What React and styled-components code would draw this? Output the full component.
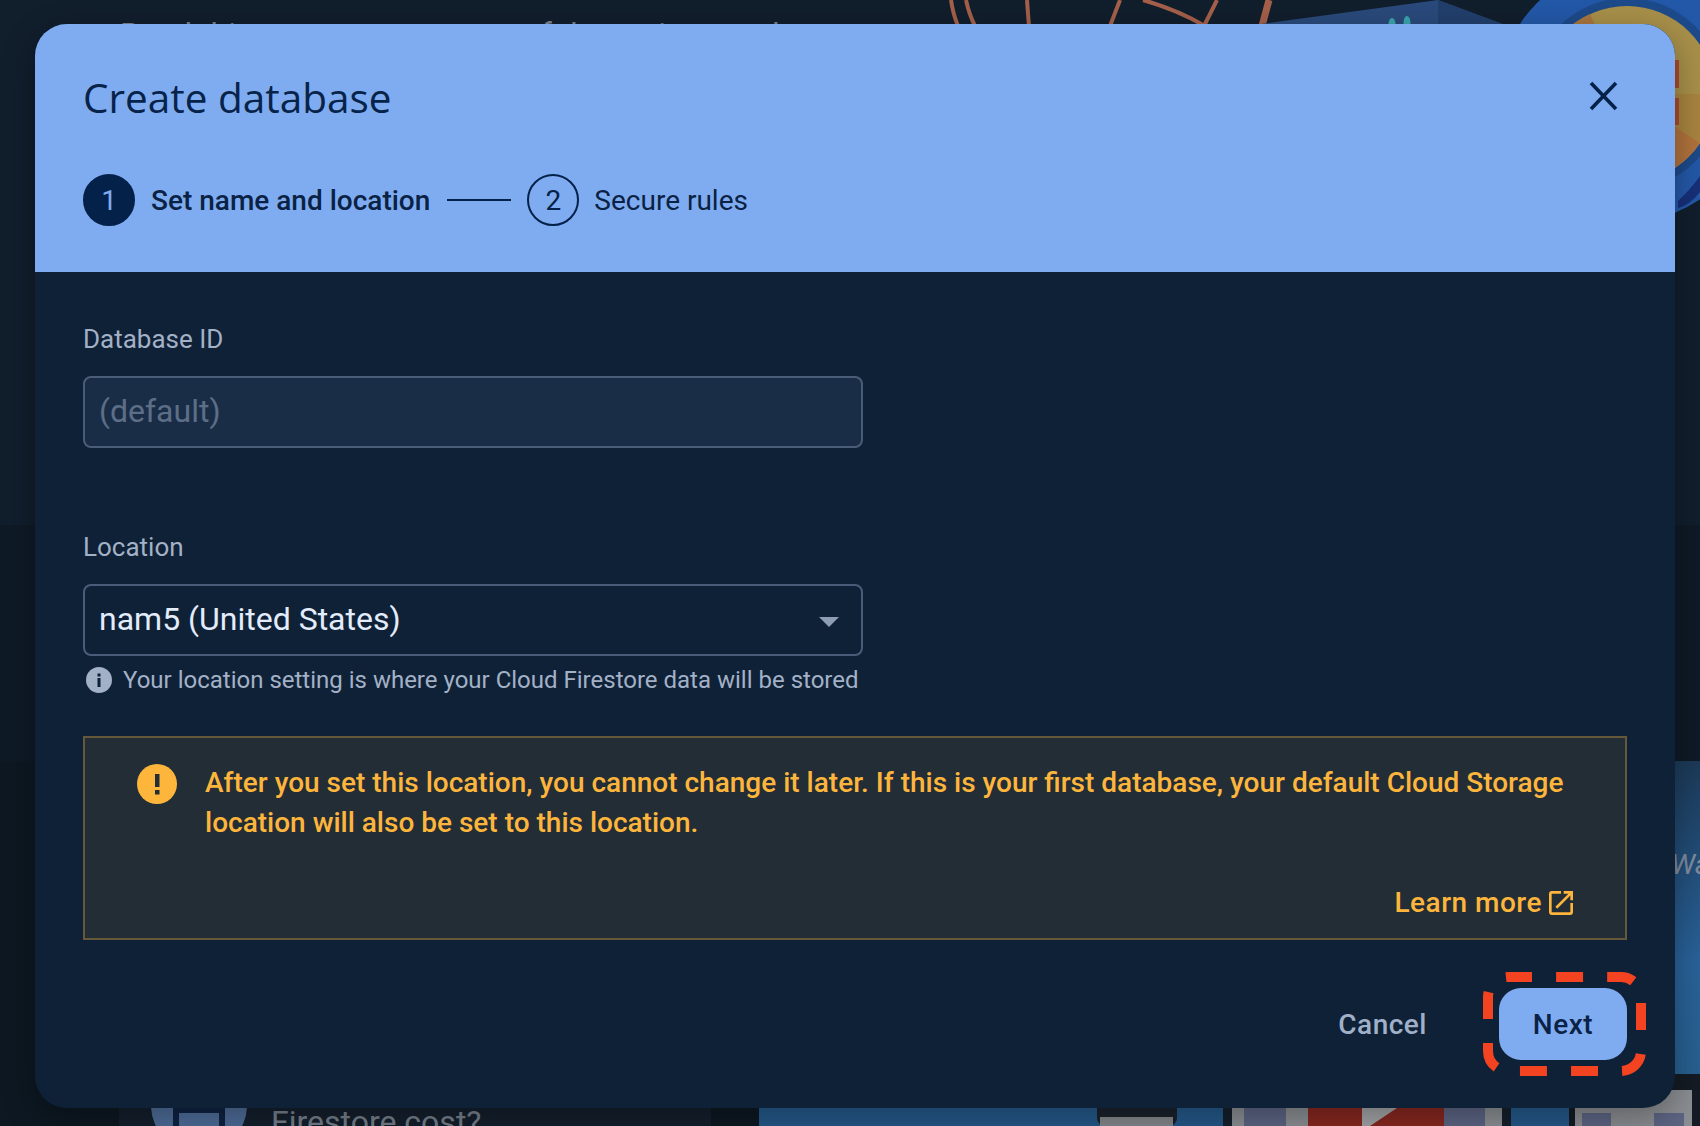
import React from "react";
import styled, { createGlobalStyle } from "styled-components";

const Global = createGlobalStyle`
  html, body { margin: 0; padding: 0; background: #101e2c; }
  body { font-family: Roboto, "Liberation Sans", sans-serif; }
  * { box-sizing: border-box; }
`;

const Screen = styled.div`
  position: relative;
  width: 1700px;
  height: 1126px;
  overflow: hidden;
  padding: 24px 25px 18px 35px;
`;

const Backdrop = styled.div`
  position: absolute;
  inset: 0;
  display: flex;
  flex-direction: column;
`;
const HeroBand = styled.div`
  height: 525px;
  background: #111e2c;
  padding: 14px 0 0 120px;
`;
const HeroText = styled.div`
  font-size: 32px;
  line-height: 40px;
  color: #7a838e;
  white-space: nowrap;
`;
const MidBand = styled.div`
  height: 236px;
  background: #0e1a26;
`;
const LowerBand = styled.div`
  flex: 1;
  display: flex;
  gap: 48px;
  padding-left: 119px;
  background: #0d1822;
`;
const TipCard = styled.div`
  flex: none;
  width: 592px;
  background: #141f2c;
  display: flex;
  align-items: flex-end;
  gap: 24px;
  padding-left: 32px;
  overflow: hidden;
`;
const TipText = styled.div`
  font-size: 32px;
  line-height: 36px;
  height: 22px;
  color: #77818d;
  white-space: nowrap;
`;
const PromoPanel = styled.div`
  flex: 1;
  min-width: 0;
  background: linear-gradient(180deg, #1c3a58 0%, #29629a 55%, #27608f 85%, #24588a 100%);
  padding: 86px 0 0 912px;
`;
const PromoText = styled.div`
  font-size: 28px;
  line-height: 36px;
  font-style: italic;
  color: #7f8d9e;
  white-space: nowrap;
`;
const ArtLayer = styled.svg`
  position: absolute;
  left: 0;
  top: 0;
`;

const Dialog = styled.section`
  position: relative;
  width: 1640px;
  height: 1084px;
  border-radius: 32px;
  overflow: hidden;
  background: #0f2137;
  box-shadow: 0 10px 34px rgba(0, 0, 0, 0.32);
  display: flex;
  flex-direction: column;
`;
const Header = styled.header`
  height: 248px;
  background: #7facf0;
  padding: 48px 48px 0;
  color: #0a2245;
  display: flex;
  flex-direction: column;
`;
const TitleRow = styled.div`
  display: flex;
  justify-content: space-between;
  align-items: center;
  height: 52px;
`;
const Title = styled.h1`
  margin: 0;
  font-family: "Open Sans", sans-serif;
  font-weight: 500;
  font-size: 40.5px;
  line-height: 52px;
  color: #08234a;
`;
const CloseButton = styled.button`
  width: 40px;
  height: 40px;
  margin: -4px 0 0;
  transform: translateX(-4px);
  padding: 0;
  border: 0;
  background: none;
  display: flex;
  align-items: center;
  justify-content: center;
`;
const Stepper = styled.div`
  display: flex;
  align-items: center;
  gap: 16px;
  margin-top: 50px;
`;
const StepCircle = styled.div`
  width: 52px;
  height: 52px;
  border-radius: 50%;
  border: 2px solid #04214a;
  background: ${(p) => (p.$active ? "#04214a" : "transparent")};
  color: ${(p) => (p.$active ? "#7facf0" : "#04214a")};
  display: flex;
  align-items: center;
  justify-content: center;
  font-size: 28px;
  font-weight: 400;
  margin-right: ${(p) => (p.$active ? 0 : -1)}px;
`;
const StepLabel = styled.div`
  font-size: 28px;
  line-height: 36px;
  margin-top: 2px;
  font-weight: ${(p) => (p.$active ? 500 : 400)};
  color: #0a2245;
`;
const StepLine = styled.div`
  width: 64px;
  height: 2px;
  margin-left: 1px;
  background: #04214a;
`;

const Body = styled.div`
  flex: 1;
  padding: 51px 48px 48px;
  display: flex;
  flex-direction: column;
`;
const FieldLabel = styled.label`
  display: block;
  font-size: 26px;
  line-height: 32px;
  color: #a3b1c6;
  margin-bottom: 21px;
`;
const InputBox = styled.div`
  width: 780px;
  height: 72px;
  border: 2px solid #4a5c77;
  border-radius: 8px;
  background: ${(p) => (p.$disabled ? "#1a2d47" : "#0f2137")};
  color: ${(p) => (p.$disabled ? "#5d6e87" : "#e3ecfb")};
  font-size: 32px;
  padding: 0 22px 2px 14px;
  display: flex;
  align-items: center;
  justify-content: space-between;
  margin-bottom: ${(p) => (p.$gap ? p.$gap : 0)}px;
`;
const Arrow = styled.span`
  width: 0;
  height: 0;
  border-left: 10.5px solid transparent;
  border-right: 10.5px solid transparent;
  border-top: 10px solid #8e9db3;
  margin-top: 5px;
`;
const Hint = styled.div`
  display: flex;
  align-items: center;
  gap: 11px;
  margin: 8px 0 0 3px;
  height: 32px;
  font-size: 24px;
  color: #a3b1c6;
  white-space: nowrap;
`;
const Warning = styled.div`
  margin-top: 40px;
  width: 1544px;
  height: 204px;
  border: 2px solid #65593a;
  background: #222d36;
  color: #fdb53c;
  padding: 25px 48px 0 52px;
  display: flex;
  flex-direction: column;
`;
const WarningTop = styled.div`
  display: flex;
  gap: 28px;
`;
const WarningText = styled.p`
  margin: 0;
  font-size: 28px;
  line-height: 40px;
  font-weight: 500;
`;
const LearnMore = styled.a`
  margin-top: 40px;
  align-self: flex-end;
  display: flex;
  align-items: center;
  gap: 3px;
  font-size: 28px;
  line-height: 40px;
  font-weight: 500;
  letter-spacing: 0.5px;
  color: #fdb53c;
`;
const Footer = styled.div`
  margin-top: 48px;
  display: flex;
  justify-content: flex-end;
  align-items: center;
  gap: 40px;
`;
const CancelButton = styled.button`
  border: 0;
  background: none;
  height: 72px;
  padding: 0 32px;
  font: 500 28px Roboto, sans-serif;
  letter-spacing: 0.5px;
  color: #9fb0c8;
`;
const NextWrap = styled.div`
  position: relative;
`;
const NextButton = styled.button`
  display: block;
  width: 128px;
  height: 72px;
  border: 0;
  border-radius: 22px;
  background: #7facf0;
  color: #0a2245;
  font: 500 28px Roboto, sans-serif;
  letter-spacing: 0.5px;
`;
const DashRing = styled.svg`
  position: absolute;
  left: -16px;
  top: -16px;
`;

const CloseIcon = () => (
  <svg width="32" height="32" viewBox="0 0 32 32">
    <path d="M4 3 L29 29 M29 3 L4 29" stroke="#04214a" strokeWidth="3.6" fill="none" />
  </svg>
);
const InfoIcon = () => (
  <svg width="26" height="26" viewBox="0 0 26 26">
    <circle cx="13" cy="13" r="13" fill="#a3b1c6" />
    <rect x="11.5" y="11" width="3" height="9" fill="#0f2137" />
    <rect x="11.5" y="6.5" width="3" height="3" fill="#0f2137" />
  </svg>
);
const WarnIcon = () => (
  <svg width="40" height="40" viewBox="0 0 40 40" style={{ flex: "none", marginTop: 1 }}>
    <circle cx="20" cy="20" r="20" fill="#fdb53c" />
    <rect x="18" y="10" width="4.5" height="13" fill="#222d36" />
    <rect x="18" y="26" width="4.5" height="4.5" fill="#222d36" />
  </svg>
);
const ExternalIcon = () => (
  <svg width="32" height="32" viewBox="0 0 24 24" fill="#fdb53c">
    <path d="M19 19H5V5h7V3H5c-1.11 0-2 .9-2 2v14c0 1.1.89 2 2 2h14c1.1 0 2-.9 2-2v-7h-2v7zM14 3v2h3.59l-9.83 9.83 1.41 1.41L19 6.41V10h2V3h-7z" />
  </svg>
);

const Art = () => (
  <ArtLayer width="1700" height="1126" viewBox="0 0 1700 1126">
    <g stroke="#a5604a" strokeWidth="4" fill="none">
      <path d="M951 0 Q953 14 958 26" />
      <path d="M966 0 Q969 14 975 26" />
      <path d="M1027 0 Q1028 14 1029 26" />
      <path d="M1120 0 L1110 26" />
      <path d="M1143 0 Q1178 10 1205 26" />
      <path d="M1217 0 L1204 26" />
      <path d="M1269 0 L1262 26" strokeWidth="7" />
    </g>
    <path d="M1246 26 L1438 0 L1508 26 Z" fill="#2a4a7c" />
    <path d="M1438 0 L1508 26 L1438 26 Z" fill="#223f6c" />
    <ellipse cx="1392" cy="24" rx="3.5" ry="6" fill="#3aa6ad" />
    <ellipse cx="1407" cy="23" rx="3.5" ry="7" fill="#3aa6ad" />

    <circle cx="1627" cy="94" r="128" fill="#2358a8" />
    <circle cx="1627" cy="94" r="96" fill="#1d4a8a" />
    <circle cx="1627" cy="94" r="88" fill="#a8904a" />
    <path d="M1627 94 L1590 14 A88 88 0 0 0 1560 36 Z" fill="#a8763f" />
    <path d="M1627 94 L1700 143 A88 88 0 0 1 1650 179 Z" fill="#b0723c" />
    <path d="M1627 94 L1700 94 L1700 143 Z" fill="#a8843f" />
    <path d="M1678 201 Q1690 190 1700 176 L1700 192 Q1690 205 1678 208 Z" fill="#17307a" />
    <rect x="1670" y="60" width="9" height="28" fill="#a84a30" />
    <rect x="1670" y="98" width="9" height="27" fill="#a84a30" />

    <rect x="1097" y="1085" width="80" height="41" rx="8" fill="#1b222c" />
    <rect x="1100" y="1117" width="73" height="9" fill="#85888c" />
    <rect x="1223" y="1085" width="288" height="41" fill="#15202c" />
    <rect x="1232" y="1085" width="270" height="41" fill="#8c9094" />
    <rect x="1244" y="1085" width="42" height="41" fill="#5d6584" />
    <rect x="1444" y="1085" width="41" height="41" fill="#5d6584" />
    <rect x="1308" y="1085" width="136" height="41" fill="#882820" />
    <path d="M1362 1085 L1397 1108 L1370 1126 L1362 1126 Z" fill="#a3a5a8" />
    <rect x="1569" y="1074" width="131" height="52" fill="#141b24" />
    <rect x="1575" y="1090" width="117" height="36" fill="#8b8e92" />
    <rect x="1582" y="1113" width="29" height="13" fill="#5d6584" />
    <rect x="1654" y="1113" width="30" height="13" fill="#5d6584" />
  </ArtLayer>
);

const TipIcon = () => (
  <svg width="96" height="18" viewBox="0 0 96 18" style={{ flex: "none", display: "block" }}>
    <circle cx="48" cy="-3" r="48" fill="#4e6d99" />
    <rect x="22" y="0" width="52" height="18" fill="#0f2342" />
    <rect x="28" y="5" width="40" height="13" fill="#4e6d99" />
  </svg>
);

export default function App() {
  return (
    <Screen>
      <Global />
      <Backdrop>
        <HeroBand>
          <HeroText>Read this to see a summary of the regions and</HeroText>
        </HeroBand>
        <MidBand />
        <LowerBand>
          <TipCard>
            <TipIcon />
            <TipText>Firestore cost?</TipText>
          </TipCard>
          <PromoPanel>
            <PromoText>Wa</PromoText>
          </PromoPanel>
        </LowerBand>
      </Backdrop>
      <Art />
      <Dialog>
        <Header>
          <TitleRow>
            <Title>Create database</Title>
            <CloseButton aria-label="Close">
              <CloseIcon />
            </CloseButton>
          </TitleRow>
          <Stepper>
            <StepCircle $active>1</StepCircle>
            <StepLabel $active>Set name and location</StepLabel>
            <StepLine />
            <StepCircle>2</StepCircle>
            <StepLabel>Secure rules</StepLabel>
          </Stepper>
        </Header>
        <Body>
          <FieldLabel>Database ID</FieldLabel>
          <InputBox $disabled $gap={83}>(default)</InputBox>
          <FieldLabel>Location</FieldLabel>
          <InputBox>
            nam5 (United States)
            <Arrow />
          </InputBox>
          <Hint>
            <InfoIcon />
            Your location setting is where your Cloud Firestore data will be stored
          </Hint>
          <Warning>
            <WarningTop>
              <WarnIcon />
              <WarningText>
                After you set this location, you cannot change it later. If this is your first database, your default Cloud Storage location will also be set to this location.
              </WarningText>
            </WarningTop>
            <LearnMore>
              Learn more
              <ExternalIcon />
            </LearnMore>
          </Warning>
          <Footer>
            <CancelButton>Cancel</CancelButton>
            <NextWrap>
              <NextButton>Next</NextButton>
              <DashRing width="163" height="104" viewBox="0 0 163 104">
                <rect x="5" y="5" width="153" height="94" rx="20" fill="none" stroke="#f44321" strokeWidth="10" strokeDasharray="27 24.08" strokeDashoffset="3" />
              </DashRing>
            </NextWrap>
          </Footer>
        </Body>
      </Dialog>
    </Screen>
  );
}
